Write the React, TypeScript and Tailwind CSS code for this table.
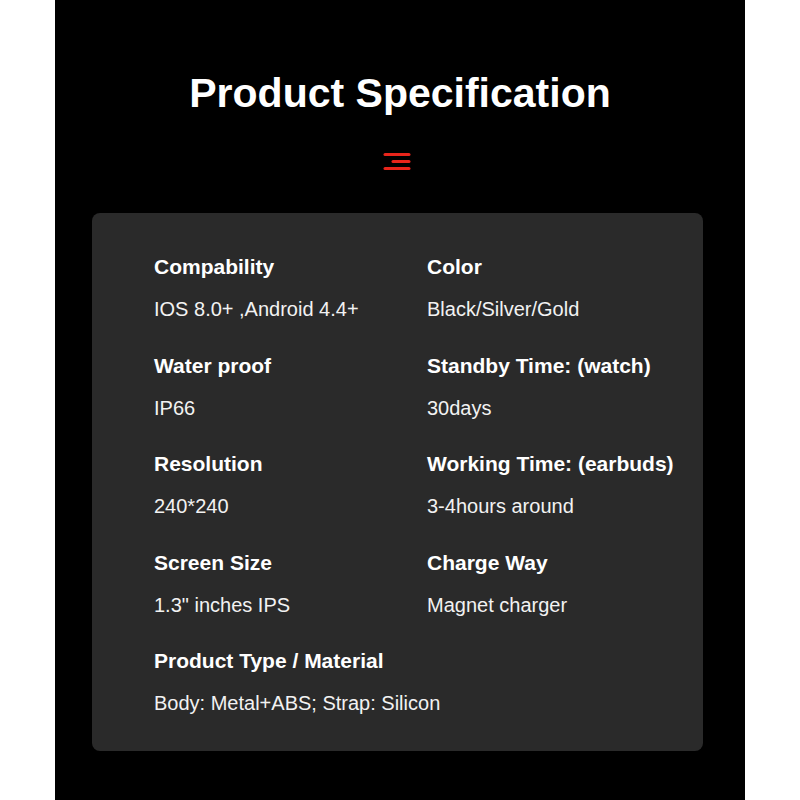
const specs: [string, string, string, string][] = [
  ["Compability", "IOS 8.0+ ,Android 4.4+", "Color", "Black/Silver/Gold"],
  ["Water proof", "IP66", "Standby Time: (watch)", "30days"],
  ["Resolution", "240*240", "Working Time: (earbuds)", "3-4hours around"],
  ["Screen Size", '1.3" inches IPS', "Charge Way", "Magnet charger"],
];

function Spec({ label, value }: { label: string; value: string }) {
  return (
    <div className="flex flex-col gap-[14px]">
      <div className="h-[28px] text-[21px] font-bold leading-[28px] text-white">{label}</div>
      <div className="h-[28px] text-[20px] leading-[28px] text-[#f2f2f2]">{value}</div>
    </div>
  );
}

function MenuIcon() {
  return (
    <svg width="28" height="20" viewBox="0 0 28 20">
      <line x1="2" y1="2.5" x2="26" y2="2.5" stroke="#e8251b" strokeWidth="3" strokeLinecap="round" />
      <line x1="10" y1="9.5" x2="26" y2="9.5" stroke="#e8251b" strokeWidth="3" strokeLinecap="round" />
      <line x1="2" y1="16.5" x2="26" y2="16.5" stroke="#e8251b" strokeWidth="3" strokeLinecap="round" />
    </svg>
  );
}

export default function App() {
  return (
    <div
      className="flex h-[800px] w-[800px] bg-white"
      style={{ fontFamily: '"Liberation Sans", Arial, sans-serif' }}
    >
      <div className="ml-[55px] flex h-full w-[690px] flex-col bg-black pt-[69px]">
        <h1 className="h-[48px] text-center text-[41px] font-bold leading-[48px] text-white">
          Product Specification
        </h1>
        <div className="mt-[35px] flex justify-center pr-[6px]">
          <MenuIcon />
        </div>
        <div className="ml-[37px] mt-[41px] flex h-[538px] w-[611px] flex-col gap-[28.5px] rounded-[8px] bg-[#2a2a2a] pl-[62px] pt-[40px]">
          {specs.map(([l1, v1, l2, v2]) => (
            <div key={l1} className="grid grid-cols-[273px_1fr]">
              <Spec label={l1} value={v1} />
              <Spec label={l2} value={v2} />
            </div>
          ))}
          <Spec label="Product Type / Material" value="Body: Metal+ABS; Strap: Silicon" />
        </div>
      </div>
    </div>
  );
}
